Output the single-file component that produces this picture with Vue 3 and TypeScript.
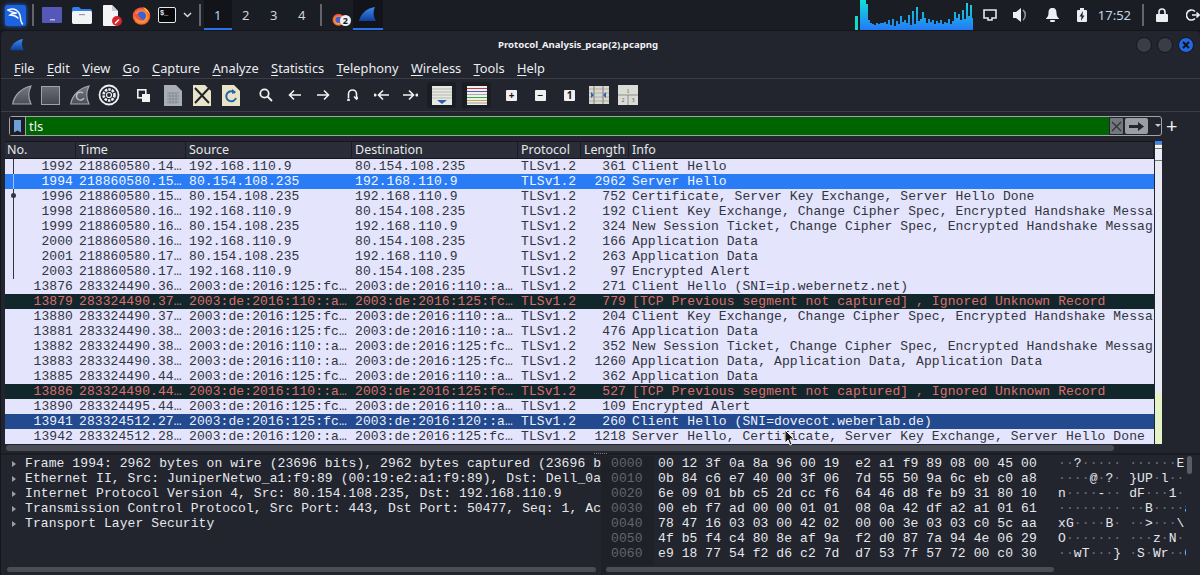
<template>
  <div class="screen">
    <svg class="defs" width="0" height="0">
      <defs>
        <linearGradient id="fin" x1="0" y1="0" x2="0" y2="1">
          <stop offset="0" stop-color="#3b8cf0" />
          <stop offset="1" stop-color="#0f3f9c" />
        </linearGradient>
        <linearGradient id="greyfin" x1="0" y1="0" x2="0" y2="1">
          <stop offset="0" stop-color="#777a82" />
          <stop offset="1" stop-color="#4a4d55" />
        </linearGradient>
        <linearGradient id="cpu" gradientUnits="userSpaceOnUse" x1="0" y1="0" x2="0" y2="30">
          <stop offset="0" stop-color="#14e0d8" />
          <stop offset="1" stop-color="#2479f5" />
        </linearGradient>
        <radialGradient id="fox" cx="0.5" cy="0.55" r="0.55">
          <stop offset="0.4" stop-color="#ffb02e" />
          <stop offset="1" stop-color="#ee3b3b" />
        </radialGradient>
      </defs>
    </svg>

    <header class="taskbar">
      <span class="kali">
        <svg width="21" height="21" viewBox="0 0 21 21" fill="none" stroke="#f6f9ff" stroke-width="1.500" stroke-linecap="round">
          <path d="M3 5c5-2 9 0 11 3 2 3 1 5 2 8 .3 1 .8 2 1.500 3" />
          <path d="M3 5c2 2 6 2 8 3-2 1-4 0-6 2 3 0 6 1 8 3" />
        </svg>
      </span>
      <i class="tsep sep-a"></i>
      <svg class="t-desk" width="20" height="16" viewBox="0 0 20 16"><rect width="20" height="16" rx="1" fill="#5558b8" /><rect x="8" y="12" width="5" height="1.500" fill="#b9bbe8" /></svg>
      <svg class="t-folder" width="20" height="17" viewBox="0 0 20 17"><path d="M0 2q0-2 2-2h5l2 2h9q2 0 2 2v2H0z" fill="#2f80ed" /><rect y="4" width="20" height="13" rx="1.500" fill="#f2f3f5" /><rect x="7" y="7" width="6" height="1.200" fill="#9a9ca5" /></svg>
      <svg class="t-file" width="20" height="21" viewBox="0 0 20 21"><path d="M0 1q0-1 1-1h8l6 6v14q0 1-1 1H1q-1 0-1-1z" fill="#f4f4f6" /><path d="M9 0l6 6H9z" fill="#c9cbd2" /><circle cx="14" cy="16" r="5" fill="#d6262c" /><path d="M11.500 18l4-4 1 1-4 4z" fill="#fff" /></svg>
      <svg class="t-fox" width="19" height="19" viewBox="0 0 19 19"><circle cx="9.500" cy="10" r="8.800" fill="url(#fox)" /><path d="M11 1c3 1 6 4 7 8-1-2-3-3-4-4z" fill="#ffc23c" /><circle cx="9.500" cy="10" r="4.600" fill="#3f5fd8" /><path d="M2 8c1 5 6 8 11 6-3 0-6-2-7-6z" fill="#f0533a" /></svg>
      <span class="t-term">$_</span>
      <svg class="t-chev" width="9" height="6" viewBox="0 0 9 6" fill="none" stroke="#d8dae0" stroke-width="1.500"><path d="M1 1l3.500 3.500L8 1" /></svg>
      <i class="tsep sep-b"></i>
      <div class="workspaces">
        <span v-for="n in 4" :key="n" class="ws" :class="{ 'ws-on': n === 1 }">{{ n }}</span>
      </div>
      <i class="tsep sep-c"></i>
      <span class="t-foxgroup">
        <svg width="13" height="13" viewBox="0 0 19 19"><circle cx="9.500" cy="10" r="8.800" fill="url(#fox)" /><circle cx="9.500" cy="10" r="4.600" fill="#3f5fd8" /></svg>
        <b class="badge">2</b>
      </span>
      <span class="t-active">
        <svg width="17" height="15" viewBox="0 0 17 15"><path d="M0 14C1 8 7 1 16 0c-2 4-2 9 1 14z" fill="url(#fin)" /></svg>
      </span>

      <svg class="graph" width="118" height="30" viewBox="0 0 118 30">
        <rect x="0" y="16" width="3" height="14" fill="#12dcc8" />
        <rect v-for="(h, i) in cpuBars" :key="i" :x="5 + i * 2" :y="30 - h" width="2" :height="h" fill="url(#cpu)" />
      </svg>
      <div class="tray">
        <svg class="tr-net" width="14" height="13" viewBox="0 0 14 13" fill="none" stroke="#e6e8ee" stroke-width="1.600"><path d="M1 1h12v8H9v2H5V9H1z" /></svg>
        <svg class="tr-vol" width="16" height="14" viewBox="0 0 16 14"><path d="M0 4h3l5-4v14l-5-4H0z" fill="#eceef2" /><path d="M10 2c3 2 3 8 0 10" fill="none" stroke="#8c8f98" stroke-width="1.600" /></svg>
        <svg class="tr-bell" width="13" height="14" viewBox="0 0 13 14"><path d="M6.500 0c3 0 4 2 4 5 0 3 1 4 2.500 5.500V11H0v-.500C1.500 9 2.500 8 2.500 5c0-3 1-5 4-5z" fill="#eceef2" /><rect x="4" y="12" width="5" height="2" rx="1" fill="#eceef2" /></svg>
        <svg class="tr-bat" width="10" height="14" viewBox="0 0 10 14"><rect x="3" width="4" height="2" fill="#eceef2" /><rect y="2" width="10" height="12" rx="1" fill="#eceef2" /><path d="M6 3L2.500 8.500h2L4 13l3.500-5.500h-2z" fill="#23262e" /></svg>
        <span class="clock">17:52</span>
        <i class="tsep sep-d"></i>
        <svg class="tr-lock" width="12" height="14" viewBox="0 0 12 14"><path d="M3 6V4a3 3 0 016 0v2" fill="none" stroke="#eceef2" stroke-width="1.600" /><rect y="6" width="12" height="8" rx="1" fill="#eceef2" /></svg>
        <svg class="tr-out" width="14" height="12" viewBox="0 0 14 12" fill="none" stroke="#eceef2" stroke-width="1.600"><path d="M9 2.500A5 5 0 106 11a5 5 0 003-1.500" /><path d="M6 6h7M10.500 3.500L13 6l-2.500 2.500" /></svg>
      </div>
    </header>

    <main class="window">
      <div class="titlebar">
        <svg class="title-fin" width="14" height="12" viewBox="0 0 17 15"><path d="M0 14C1 8 7 1 16 0c-2 4-2 9 1 14z" fill="url(#fin)" /></svg>
        <span class="title">Protocol_Analysis_pcap(2).pcapng</span>
        <div class="winbtns">
          <i class="winbtn"></i>
          <i class="winbtn"></i>
          <i class="winbtn winbtn-close">
            <svg width="8" height="8" viewBox="0 0 8 8" stroke="#10131a" stroke-width="2"><path d="M1 1l6 6M7 1L1 7" /></svg>
          </i>
        </div>
      </div>

      <nav class="menubar">
        <span v-for="m in menus" :key="m"><u>{{ m[0] }}</u>{{ m.slice(1) }}</span>
      </nav>

      <div class="toolbar">
        <span class="tool"><svg width="20" height="20" viewBox="0 0 20 20"><path d="M.700 19C2 11 9 3 19 1c-3 6-3 12 0 18z" fill="url(#greyfin)" stroke="#a2a5ab" stroke-width="1.200" /></svg></span>
        <span class="tool"><i class="stop"></i></span>
        <span class="tool"><svg width="20" height="20" viewBox="0 0 20 20"><path d="M.700 19C2 11 9 3 19 1c-3 6-3 12 0 18z" fill="url(#greyfin)" stroke="#a2a5ab" stroke-width="1.200" /><path d="M13 8a4 4 0 10 1 5" fill="none" stroke="#c0c2c8" stroke-width="1.400" /></svg></span>
        <span class="tool"><svg width="22" height="22" viewBox="0 0 22 22" fill="none" stroke="#eef0f3"><circle cx="11" cy="11" r="9.500" stroke-width="1.800" /><circle cx="11" cy="11" r="5.500" stroke-width="2.600" stroke-dasharray="2.500 1" /><circle cx="11" cy="11" r="2.500" stroke-width="1.200" /></svg></span>
        <i class="tool-gap"></i>
        <span class="tool"><svg width="13" height="13" viewBox="0 0 13 13"><rect x="0.800" y="0.800" width="8" height="8" fill="none" stroke="#f2f2f2" stroke-width="1.600" /><rect x="5" y="5" width="8" height="8" fill="#f2f2f2" /></svg></span>
        <span class="tool"><svg width="18" height="21" viewBox="0 0 18 21"><path d="M0 0h12l6 6v15H0z" fill="#a8aeb8" /><path d="M3 8h12M3 11h12M3 14h12M3 17h12M6 8v11M9 8v11M12 8v11" stroke="#868c96" /></svg></span>
        <span class="tool"><svg width="18" height="21" viewBox="0 0 18 21"><path d="M0 0h12l6 6v15H0z" fill="#e8e4c8" /><path d="M2 3l14 15M16 3L2 18" stroke="#20232a" stroke-width="2" /></svg></span>
        <span class="tool"><svg width="18" height="21" viewBox="0 0 18 21"><path d="M0 0h12l6 6v15H0z" fill="#e8e4c8" /><path d="M13 8a5 5 0 10 1 5" fill="none" stroke="#2a62ad" stroke-width="2" /><path d="M10 4l4 3-4 2z" fill="#2a62ad" /></svg></span>
        <i class="tool-gap"></i>
        <span class="tool"><svg width="14" height="14" viewBox="0 0 14 14" fill="none" stroke="#f2f2f2" stroke-width="1.800"><circle cx="5.500" cy="5.500" r="4.200" /><path d="M8.500 8.500l4.500 4.500" /></svg></span>
        <span class="tool"><svg width="13" height="12" viewBox="0 0 13 12" fill="none" stroke="#f2f2f2" stroke-width="1.600"><path d="M13 6H2M6 1.500L1.500 6 6 10.500" /></svg></span>
        <span class="tool"><svg width="13" height="12" viewBox="0 0 13 12" fill="none" stroke="#f2f2f2" stroke-width="1.600"><path d="M0 6h11M7 1.500L11.500 6 7 10.500" /></svg></span>
        <span class="tool"><svg width="11" height="12" viewBox="0 0 11 12" fill="none" stroke="#f2f2f2" stroke-width="1.600"><path d="M1.500 9V5a4 4 0 018 0v4" /><path d="M7 7.500l2.500 2.500L12 7.500" /><circle cx="1.500" cy="11" r=".6" fill="#f2f2f2" /></svg></span>
        <span class="tool"><svg width="15" height="12" viewBox="0 0 15 12" fill="none" stroke="#f2f2f2" stroke-width="1.600"><circle cx="1" cy="6" r=".8" fill="#f2f2f2" /><path d="M15 6H5M9 1.500L4.500 6 9 10.500" /></svg></span>
        <span class="tool"><svg width="15" height="12" viewBox="0 0 15 12" fill="none" stroke="#f2f2f2" stroke-width="1.600"><circle cx="14" cy="6" r=".8" fill="#f2f2f2" /><path d="M0 6h10M6 1.500L10.500 6 6 10.500" /></svg></span>
        <i class="tool-gap small"></i>
        <span class="tool framed"><svg width="20" height="19" viewBox="0 0 20 19"><rect width="20" height="19" fill="#e8e8e2" /><path d="M0 3h20M0 6h20M0 9h20M0 12h20" stroke="#b8b8b2" /><path d="M5 14h10l-5 4z" fill="#2a62ad" /></svg></span>
        <i class="tool-gap tiny"></i>
        <span class="tool framed"><svg width="20" height="19" viewBox="0 0 20 19"><rect width="20" height="19" fill="#f0f0ea" /><path d="M0 2.500h20" stroke="#c83a3a" /><path d="M0 5.500h20" stroke="#4a5bc8" /><path d="M0 8.500h20" stroke="#a8a8a8" /><path d="M0 11.500h20" stroke="#3aa84a" /><path d="M0 14.500h20" stroke="#c8a83a" /><path d="M0 17h20" stroke="#9a9a9a" /></svg></span>
        <i class="tool-gap tiny"></i>
        <span class="tool"><i class="zoombtn">+</i></span>
        <span class="tool"><i class="zoombtn">−</i></span>
        <span class="tool"><i class="zoombtn">1</i></span>
        <span class="tool"><svg width="20" height="18" viewBox="0 0 20 18"><rect width="20" height="18" fill="#d8d8d0" /><path d="M0 3h20M0 7h20M0 11h20M0 15h20" stroke="#b0b0a8" /><path d="M5 0v18M14 0v18" stroke="#80807a" /><path d="M2 6l3 3-3 3zM17 6l-3 3 3 3z" fill="#2a62ad" /></svg></span>
        <span class="tool"><svg width="20" height="20" viewBox="0 0 20 20"><rect width="20" height="20" fill="#dcdcd6" /><path d="M0 10h20M10 10v10" stroke="#8e8e88" /><text x="10" y="7.500" class="lay">1</text><text x="5" y="17" class="lay">2</text><text x="15" y="17" class="lay">3</text></svg></span>
      </div>

      <div class="filter">
        <div class="filter-box">
          <span class="bookmark"><i></i></span>
          <span class="filter-input">tls</span>
          <span class="filter-x"><svg width="11" height="11" viewBox="0 0 11 11" stroke="#30333a" stroke-width="1.300"><path d="M1 1l9 9M10 1l-9 9" /></svg></span>
          <span class="filter-go"><svg width="15" height="9" viewBox="0 0 15 9"><path d="M0 3h9V0l6 4.500L9 9V6H0z" fill="#23262e" /></svg></span>
          <span class="filter-drop"></span>
        </div>
        <span class="plus">+</span>
      </div>

      <div class="listpane">
        <div class="table">
          <div class="grid head">
            <span>No.</span><span>Time</span><span>Source</span><span>Destination</span><span>Protocol</span><span>Length</span><span>Info</span>
          </div>
          <div v-for="r in rows" :key="r.no" class="grid row" :class="r.kind">
            <span class="c-no"><i v-if="r.conv" class="conv" :class="r.conv"></i>{{ r.no }}</span>
            <span>{{ r.time }}</span>
            <span>{{ r.src }}</span>
            <span>{{ r.dst }}</span>
            <span>TLSv1.2</span>
            <span class="c-len">{{ r.len }}</span>
            <span>{{ r.info }}</span>
          </div>
        </div>
        <div class="minimap">
          <i class="mm-blue"></i><i class="mm-white"></i><i class="mm-thumb"></i><i class="mm-fill"></i><i class="mm-green"></i>
        </div>
      </div>

      <div class="hscroll"><i></i></div>
      <div class="split-h"><span class="dots"></span></div>

      <div class="lower">
        <section class="details">
          <div class="detail-rows">
            <div v-for="d in details" :key="d" class="detail"><i class="tri"></i><span>{{ d }}</span></div>
          </div>
          <div class="lower-scroll"><i></i></div>
        </section>
        <div class="split-v"></div>
        <section class="bytes">
          <div class="hexview">
            <div class="offsets"><div v-for="h in hexRows" :key="h.off" class="hexline">{{ h.off }}</div></div>
            <div class="hexcol"><div v-for="h in hexRows" :key="h.off" class="hexline">{{ h.hex }}</div></div>
            <div class="asciicol">
              <div v-for="h in hexRows" :key="h.off" class="hexline"><span v-for="(c, i) in h.chars" :key="i" :class="{ dim: c === '·' }">{{ c }}</span></div>
            </div>
            <i class="vthumb"></i>
          </div>
          <div class="lower-scroll hex"><i></i></div>
        </section>
      </div>
    </main>

    <svg class="cursor" width="12" height="17" viewBox="0 0 12 17"><path d="M1 1v13l3-3 2 5 2-1-2-5h4z" fill="#15171c" stroke="#f4f4f4" /></svg>
  </div>
</template>

<script setup lang="ts">
type Row = { no: number; time: string; src: string; dst: string; len: number; info: string; kind?: string; conv?: string }

const menus = ['File', 'Edit', 'View', 'Go', 'Capture', 'Analyze', 'Statistics', 'Telephony', 'Wireless', 'Tools', 'Help']

const A = '192.168.110.9'
const B = '80.154.108.235'
const V6A = '2003:de:2016:125:fc…'
const V6B = '2003:de:2016:110::a…'
const V6C = '2003:de:2016:120::a…'
const CKE = 'Client Key Exchange, Change Cipher Spec, Encrypted Handshake Messa'
const NST = 'New Session Ticket, Change Cipher Spec, Encrypted Handshake Messag'
const PREV = '[TCP Previous segment not captured] , Ignored Unknown Record'

const rows: Row[] = [
  { no: 1992, time: '218860580.14…', src: A, dst: B, len: 361, info: 'Client Hello', conv: 'first' },
  { no: 1994, time: '218860580.15…', src: B, dst: A, len: 2962, info: 'Server Hello', kind: 'sel', conv: 'mid' },
  { no: 1996, time: '218860580.15…', src: B, dst: A, len: 752, info: 'Certificate, Server Key Exchange, Server Hello Done', conv: 'dot' },
  { no: 1998, time: '218860580.16…', src: A, dst: B, len: 192, info: CKE, conv: 'mid' },
  { no: 1999, time: '218860580.16…', src: B, dst: A, len: 324, info: NST, conv: 'mid' },
  { no: 2000, time: '218860580.16…', src: A, dst: B, len: 166, info: 'Application Data', conv: 'mid' },
  { no: 2001, time: '218860580.17…', src: B, dst: A, len: 263, info: 'Application Data', conv: 'mid' },
  { no: 2003, time: '218860580.17…', src: A, dst: B, len: 97, info: 'Encrypted Alert', conv: 'last' },
  { no: 13876, time: '283324490.36…', src: V6A, dst: V6B, len: 271, info: 'Client Hello (SNI=ip.webernetz.net)' },
  { no: 13879, time: '283324490.37…', src: V6B, dst: V6A, len: 779, info: PREV, kind: 'bad' },
  { no: 13880, time: '283324490.37…', src: V6A, dst: V6B, len: 204, info: CKE },
  { no: 13881, time: '283324490.38…', src: V6A, dst: V6B, len: 476, info: 'Application Data' },
  { no: 13882, time: '283324490.38…', src: V6B, dst: V6A, len: 352, info: NST },
  { no: 13883, time: '283324490.38…', src: V6B, dst: V6A, len: 1260, info: 'Application Data, Application Data, Application Data' },
  { no: 13885, time: '283324490.44…', src: V6A, dst: V6B, len: 362, info: 'Application Data' },
  { no: 13886, time: '283324490.44…', src: V6B, dst: V6A, len: 527, info: PREV, kind: 'bad' },
  { no: 13890, time: '283324495.44…', src: V6A, dst: V6B, len: 109, info: 'Encrypted Alert' },
  { no: 13941, time: '283324512.27…', src: V6A, dst: V6C, len: 260, info: 'Client Hello (SNI=dovecot.weberlab.de)', kind: 'mark' },
  { no: 13942, time: '283324512.28…', src: V6C, dst: V6A, len: 1218, info: 'Server Hello, Certificate, Server Key Exchange, Server Hello Done' },
]

const details = [
  'Frame 1994: 2962 bytes on wire (23696 bits), 2962 bytes captured (23696 bits)',
  'Ethernet II, Src: JuniperNetwo_a1:f9:89 (00:19:e2:a1:f9:89), Dst: Dell_0a:8a:96 (00:12:3f:0a:8a:96)',
  'Internet Protocol Version 4, Src: 80.154.108.235, Dst: 192.168.110.9',
  'Transmission Control Protocol, Src Port: 443, Dst Port: 50477, Seq: 1, Ack: 1, Len: 2908',
  'Transport Layer Security',
]

const hexDump = [
  '00 12 3f 0a 8a 96 00 19  e2 a1 f9 89 08 00 45 00',
  '0b 84 c6 e7 40 00 3f 06  7d 55 50 9a 6c eb c0 a8',
  '6e 09 01 bb c5 2d cc f6  64 46 d8 fe b9 31 80 10',
  '00 eb f7 ad 00 00 01 01  08 0a 42 df a2 a1 01 61',
  '78 47 16 03 03 00 42 02  00 00 3e 03 03 c0 5c aa',
  '4f b5 f4 c4 80 8e af 9a  f2 d0 87 7a 94 4e 06 29',
  'e9 18 77 54 f2 d6 c2 7d  d7 53 7f 57 72 00 c0 30',
]

const toChar = (b: string) => {
  const v = parseInt(b, 16)
  return v >= 32 && v < 127 ? String.fromCharCode(v) : '·'
}

const hexRows = hexDump.map((hex, i) => {
  const [left, right] = hex.split('  ')
  const chars = [...left.split(' ').map(toChar), ' ', ...right.split(' ').map(toChar)]
  return { off: (i * 16).toString(16).padStart(4, '0'), hex, chars }
})

const cpuBars = [
  30, 30, 30, 26, 10, 7, 6, 5, 7, 6, 7, 7, 8, 6, 10, 5, 11, 4, 9, 6, 14, 8, 10, 7, 15, 5, 19, 6, 23, 9, 11, 18, 12,
  7, 11, 8, 10, 6, 9, 7, 10, 6, 8, 7, 11, 6, 9, 18, 12, 16, 10, 20, 11, 27, 14, 25, 12, 22, 15,
]
</script>

<style>
html, body {
  margin: 0;
  background: #14161c;
  overflow: hidden;
}
</style>

<style scoped>
.screen {
  position: relative;
  width: 1200px;
  height: 575px;
  overflow: hidden;
  display: flex;
  flex-direction: column;
  font-family: "Noto Sans", sans-serif;
  color: #e4e6ea;
  background: #14161c;
}
.defs { position: absolute; }
i { font-style: normal; display: block; }

/* top panel */
.taskbar {
  height: 30px;
  flex: none;
  display: flex;
  align-items: center;
  background: #1b1d24;
}
.kali {
  margin-left: 5px;
  width: 21px;
  height: 21px;
  border-radius: 2px;
  background: #1c63e0;
  box-shadow: 0 0 4px #1c63e0;
}
.tsep { width: 2px; height: 22px; background: #62656c; flex: none; }
.sep-a { margin-left: 6px; }
.t-desk { margin-left: 8px; }
.t-folder { margin-left: 10px; }
.t-file { margin-left: 11px; }
.t-fox { margin-left: 9px; }
.t-term {
  margin-left: 7px;
  width: 18px;
  height: 16px;
  box-sizing: border-box;
  border: 1px solid #e8e8e8;
  border-radius: 2px;
  background: #08090c;
  font: 700 7px/11px "Liberation Mono", monospace;
  padding-left: 1px;
}
.t-chev { margin-left: 7px; }
.sep-b { margin-left: 7px; }
.workspaces { display: flex; margin-left: 3px; }
.ws {
  width: 28px;
  height: 30px;
  box-sizing: border-box;
  font-size: 13px;
  line-height: 30px;
  text-align: center;
  color: #cfd3da;
}
.ws-on { background: #12141a; border-bottom: 2px solid #2a72e8; color: #b8d0f0; }
.sep-c { margin-left: 4px; }
.t-foxgroup { position: relative; margin-left: 10px; height: 13px; }
.badge {
  position: absolute;
  left: 8px;
  top: 6px;
  width: 11px;
  height: 11px;
  border-radius: 50%;
  background: #f0f0f0;
  color: #15171c;
  font: 700 9px/11px "Noto Sans", sans-serif;
  text-align: center;
}
.t-active {
  margin-left: 8px;
  width: 30px;
  height: 30px;
  box-sizing: border-box;
  background: #12141a;
  border-bottom: 2px solid #2a72e8;
  display: flex;
  align-items: center;
  justify-content: center;
}
.graph { margin-left: 472px; flex: none; }
.tray { display: flex; align-items: center; margin-left: 10px; }
.tr-vol { margin-left: 16px; }
.tr-bell { margin-left: 17px; }
.tr-bat { margin-left: 18px; }
.clock { margin-left: 11px; font-size: 13px; color: #c6d4ea; line-height: 30px; }
.sep-d { margin-left: 11px; }
.tr-lock { margin-left: 12px; }
.tr-out { margin-left: 18px; }

/* window */
.window {
  margin-top: 1px;
  flex: 1;
  display: flex;
  flex-direction: column;
  margin-left: 1px;
  border-radius: 4px 4px 0 0;
  background: #22252e;
}
.titlebar {
  height: 27px;
  flex: none;
  display: flex;
  align-items: center;
  position: relative;
}
.title-fin { margin-left: 9px; }
.title {
  position: absolute;
  left: 497px;
  font-size: 9.600px;
  font-weight: 700;
  color: #f0f1f4;
}
.winbtns { margin-left: auto; margin-right: 6px; display: flex; gap: 5px; }
.winbtn {
  width: 14px;
  height: 14px;
  border: 1px solid #14161c;
  border-radius: 50%;
  background: #3a3d47;
  display: flex;
  align-items: center;
  justify-content: center;
}
.winbtn-close { background: #2368e0; }

.menubar {
  height: 20px;
  flex: none;
  display: flex;
  gap: 12.400px;
  padding-left: 13px;
  font-size: 12.800px;
  line-height: 21px;
  color: #ecedf0;
}
.menubar u { text-decoration-thickness: 1px; text-underline-offset: 2px; }

.toolbar {
  height: 34px;
  flex: none;
  box-sizing: border-box;
  display: flex;
  align-items: center;
  padding-left: 6px;
  border-top: 1px solid #3a3d47;
  border-bottom: 1px solid #3a3d47;
}
.tool { width: 29px; height: 26px; flex: none; display: flex; align-items: center; justify-content: center; }
.tool-gap { width: 6px; flex: none; }
.tool-gap.small { width: 2px; }
.tool-gap.tiny { width: 6px; }
.framed { border-radius: 3px; background: #1b1d24; }
.stop {
  width: 17px;
  height: 17px;
  border: 1.500px solid #9ea1a8;
  background: linear-gradient(#6a6d75, #44474f);
}
.zoombtn {
  width: 11px;
  height: 11px;
  background: #f0f0f0;
  border-radius: 1px;
  color: #15171c;
  font: 700 10px/11px "Noto Sans", sans-serif;
  text-align: center;
}
.lay { font: 6px "Liberation Serif", serif; text-anchor: middle; fill: #55555a; }

.filter {
  height: 29px;
  flex: none;
  box-sizing: border-box;
  padding: 4px 0 0 8px;
  display: flex;
  align-items: flex-start;
}
.filter-box {
  width: 1153px;
  height: 20px;
  box-sizing: border-box;
  border: 1px solid #a0a3aa;
  border-radius: 3px;
  display: flex;
  align-items: stretch;
}
.bookmark {
  width: 15px;
  flex: none;
  display: flex;
  align-items: center;
  justify-content: center;
  background: #1b1d24;
  border-right: 1px solid #a0a3aa;
}
.bookmark i {
  width: 7px;
  height: 13px;
  background: #6d9fd8;
  clip-path: polygon(0 0, 100% 0, 100% 100%, 50% 85%, 0 100%);
}
.filter-input {
  width: 1083px;
  flex: none;
  background: #006400;
  color: #f4f4f4;
  font-size: 13px;
  line-height: 18px;
  padding-left: 3px;
  box-sizing: border-box;
}
.filter-x {
  width: 14px;
  margin: 1px 0 1px 1px;
  background: #74777e;
  border-radius: 1px;
  display: flex;
  align-items: center;
  justify-content: center;
}
.filter-go {
  width: 24px;
  margin: 1px 0 1px 2px;
  background: #9a9da3;
  border-radius: 2px;
  display: flex;
  align-items: center;
  justify-content: center;
}
.filter-drop {
  margin: 7px 0 0 7px;
  width: 0;
  height: 0;
  border-left: 3px solid transparent;
  border-right: 3px solid transparent;
  border-top: 3px solid #c8cad0;
}
.plus { margin-left: 4px; font-size: 20px; line-height: 19px; color: #f0f0f0; }

/* packet list */
.listpane {
  display: flex;
  flex: none;
  height: 303px;
  margin-left: 4px;
}
.table { width: 1149px; flex: none; }
.grid {
  display: grid;
  grid-template-columns: 71px 110px 166px 166px 63px 48px 525px;
}
.head {
  height: 18px;
  box-sizing: border-box;
  background: #2a2d37;
  border-top: 1px solid #14161c;
  border-bottom: 1px solid #14161c;
  font-size: 12.500px;
  line-height: 16px;
  color: #e6e8ec;
}
.head span { padding-left: 3px; border-right: 1px solid #1a1c23; white-space: nowrap; }
.head span:nth-child(1) { padding-left: 2px; }
.row {
  height: 15px;
  font: 13px/15px "Liberation Mono", monospace;
  letter-spacing: 0.090px;
  white-space: pre;
  background: #e4e4fc;
  color: #30353e;
}
.row span { padding-left: 3px; overflow: hidden; }
.row .c-no { text-align: right; padding: 0 3px 0 0; position: relative; }
.row .c-len { text-align: right; padding: 0 3px 0 0; }
.row.sel { background: #2a7cf6; color: #f2f6ff; }
.row.bad { background: #12272c; color: #dc6e6e; }
.row.mark { background: #23498f; color: #eef2fa; }
.conv { position: absolute; left: 8px; width: 1px; background: #30353e; top: 0; bottom: 0; }
.conv.dot::after { content: ""; position: absolute; top: 4px; left: -2px; width: 5px; height: 5px; border-radius: 50%; background: #30353e; }
.sel .conv { background: #9fc4fa; }
.minimap {
  width: 7px;
  flex: none;
  margin-left: 1px;
  display: flex;
  flex-direction: column;
  background: #e8eaf6;
}
.minimap i:nth-child(1) { height: 3px; background: #3f82e8; }
.mm-white { height: 3px; background: #f4f4fa; border-top: 1px solid #888; }
.mm-thumb { height: 11px; background: #ecedf6; border-top: 1px solid #777; border-bottom: 1px solid #777; }
.mm-fill { flex: 1; }
.mm-green { height: 51px; background: #e4f3c8; }

.hscroll { height: 9px; flex: none; padding: 1px 0 0 5px; box-sizing: border-box; }
.hscroll i { width: 1108px; height: 6px; border-radius: 3px; background: #4a4d56; }
.split-h { height: 2px; flex: none; position: relative; background: #1a1c23; }
.dots {
  position: absolute;
  left: 593px;
  top: 0;
  width: 13px;
  height: 1px;
  background: repeating-linear-gradient(90deg, #7a7d85 0 1px, transparent 1px 2px);
}

/* lower panes */
.lower { flex: 1; display: flex; min-height: 0; }
.details {
  width: 596px;
  flex: none;
  display: flex;
  flex-direction: column;
  margin-left: 4px;
}
.detail-rows { flex: 1; overflow: hidden; padding-top: 1px; }
.detail {
  display: flex;
  align-items: center;
  height: 15px;
  font: 13px/15px "Liberation Mono", monospace;
  letter-spacing: 0.090px;
  white-space: pre;
  color: #e6e8ec;
}
.tri {
  margin: 0 9px 0 7px;
  width: 0;
  height: 0;
  flex: none;
  border-top: 3px solid transparent;
  border-bottom: 3px solid transparent;
  border-left: 4px solid #9b9ea6;
}
.lower-scroll { height: 9px; flex: none; padding-top: 1px; box-sizing: border-box; }
.lower-scroll i { width: 589px; height: 5px; border-radius: 3px; background: #4a4d56; margin-left: 2px; }
.lower-scroll.hex i { width: 448px; margin-left: 0; }
.split-v { width: 5px; flex: none; background: #1f2129; }
.bytes { width: 590px; flex: none; display: flex; flex-direction: column; }
.hexview {
  flex: 1;
  display: flex;
  position: relative;
  overflow: hidden;
  padding-top: 1px;
  font: 13px/15px "Liberation Mono", monospace;
  letter-spacing: 0.090px;
  white-space: pre;
  color: #e6e8ec;
}
.hexline { height: 15px; }
.offsets { width: 48px; flex: none; padding-left: 5px; box-sizing: border-box; color: #62656e; background: #1f2129; }
.hexcol { width: 404px; flex: none; padding-left: 4px; box-sizing: border-box; }
.asciicol { width: 128px; flex: none; overflow: hidden; }
.dim { color: #6d7078; }
.vthumb {
  position: absolute;
  right: 4px;
  top: 1px;
  width: 5px;
  height: 18px;
  border-radius: 3px;
  background: #5a5d66;
}
.cursor { position: absolute; left: 784px; top: 429px; }
</style>
